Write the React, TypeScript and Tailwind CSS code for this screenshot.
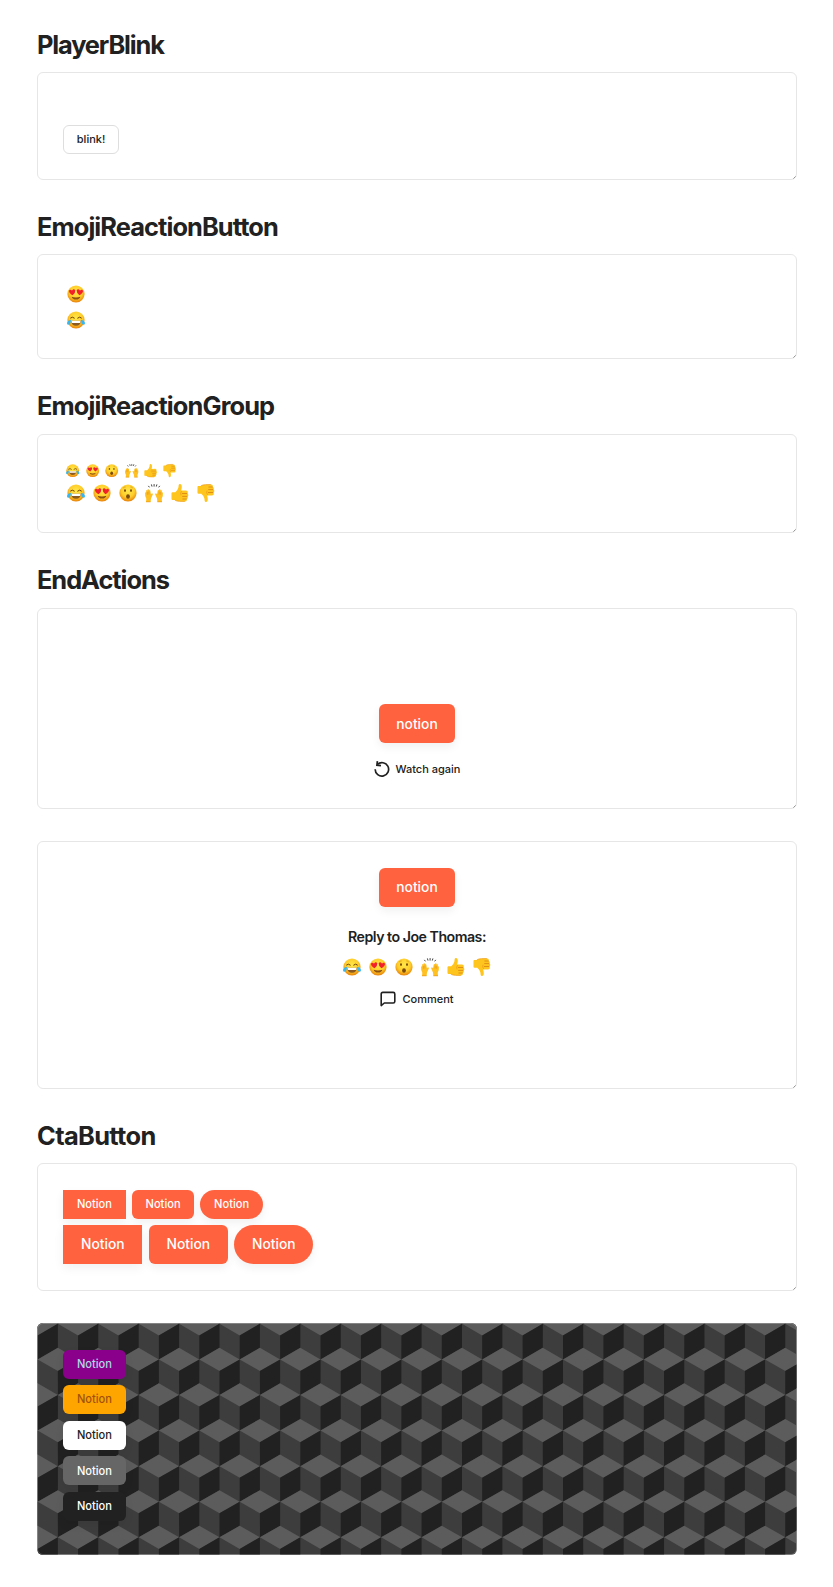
import type { ReactNode } from 'react';

type EmojiName = 'joy' | 'love' | 'wow' | 'hands' | 'up' | 'down';
const emojis: EmojiName[] = ['joy', 'love', 'wow', 'hands', 'up', 'down'];

function Thumb() {
  return (
    <>
      <path
        d="M4.5 13.2 Q4.5 12.3 5.5 12.3 L8.3 12.3 Q10.8 10.2 11.4 7.6 L11.7 5.1 Q12 3.8 13.2 4.1 Q15.2 4.8 14.7 8.1 L14.2 10.6 L19 10.5 Q21 10.7 20.8 12.3 Q20.8 13.1 20.2 13.5 Q21.6 14.1 21.3 15.4 Q21.1 16.2 20.3 16.5 Q21.1 17.2 20.7 18.2 Q20.4 18.9 19.6 19.1 Q20.1 19.7 19.7 20.5 Q19.3 21.4 17.8 21.4 L12.5 21.3 Q9.5 21.2 7.8 20 L5.2 19.9 Q4.5 19.8 4.5 19 Z"
        fill="#ffc51f"
      />
      <path d="M15.3 13.5H20M15.6 16.4H20M15.8 19H19.4" stroke="#dc8b12" strokeWidth=".9" strokeLinecap="round" fill="none" />
      <path d="M14.6 11.2Q13 13 14 15.3M7.8 20Q9.5 21.2 12.5 21.3L17.8 21.4" stroke="#eda01a" strokeWidth=".8" fill="none" />
    </>
  );
}

function Emoji({ name, small = false }: { name: EmojiName; small?: boolean }) {
  return (
    <svg viewBox="0 0 26 26" className={small ? 'size-[19.4px] shrink-0' : 'size-[26px] shrink-0'} role="img" aria-label={name}>
      <defs>
        <radialGradient id="face" cx=".5" cy=".38" r=".62">
          <stop offset="0" stopColor="#ffe94a" />
          <stop offset=".6" stopColor="#ffcd2a" />
          <stop offset="1" stopColor="#e67f08" />
        </radialGradient>
      </defs>
      {(name === 'joy' || name === 'love' || name === 'wow') && <circle cx="13" cy="13" r="8.6" fill="url(#face)" />}
      {name === 'joy' && (
        <>
          <path d="M7.6 10.9Q9.4 9.2 11.3 11M14.7 11Q16.6 9.2 18.4 10.9" stroke="#6b3d0c" strokeWidth="1" fill="none" strokeLinecap="round" />
          <path d="M8 13.7H18Q17.6 18.6 13 18.7Q8.4 18.6 8 13.7Z" fill="#8a5a22" />
          <path d="M8.4 13.7H17.6L17.2 15.9H8.8Z" fill="#fff" />
          <path d="M8 12.8Q4.3 13.4 4 16.2Q4.3 18.1 6.1 17.6Q7.9 16.7 8 12.8ZM18 12.8Q21.7 13.4 22 16.2Q21.7 18.1 19.9 17.6Q18.1 16.7 18 12.8Z" fill="#35b5f1" />
        </>
      )}
      {name === 'love' && (
        <>
          <path d="M9.6 14.2Q5.8 12.2 6 9.8Q6.8 7.7 9 9.4Q11 7.2 12.3 9.3Q12.7 11.8 9.6 14.2ZM16.4 14.2Q13.3 11.8 13.7 9.3Q15 7.2 17 9.4Q19.2 7.7 20 9.8Q20.2 12.2 16.4 14.2Z" fill="#f2202b" />
          <path d="M8.6 15.8Q13 17.4 17.4 15.8Q16.6 18.6 13 18.6Q9.4 18.6 8.6 15.8Z" fill="#8d5011" />
        </>
      )}
      {name === 'wow' && (
        <>
          <ellipse cx="10" cy="10.6" rx="1" ry="1.3" fill="#7a4a10" />
          <ellipse cx="16" cy="10.6" rx="1" ry="1.3" fill="#7a4a10" />
          <path d="M8.3 7.9Q9.3 6.8 10.6 7M15.4 7Q16.7 6.8 17.7 7.9" stroke="#c5841a" strokeWidth=".6" fill="none" />
          <ellipse cx="13" cy="16.5" rx="1.9" ry="2.3" fill="#7a4a10" />
        </>
      )}
      {name === 'hands' && (
        <>
          <g fill="#ffc021">
            <path id="raised-hand" d="M5 21.9L5.3 18.8Q3.8 16.8 4.1 13.1Q4.3 11.8 5.1 12.6L5.2 10.6Q5.6 9.3 6.4 10.5L6.6 9.6Q7.3 8.5 7.9 9.9L8 10.3Q8.9 9.4 9.3 10.7L9.9 14.1L10.9 13.5Q12.2 13.2 11.8 14.5L10 18.4L9.6 21.9Z" />
            <use href="#raised-hand" transform="translate(26 0) scale(-1 1)" />
          </g>
          <path d="M6.3 12V14.8M7.9 11.5V14.6M19.7 12V14.8M18.1 11.5V14.6M5 21.8H9.6M16.4 21.8H21" stroke="#e69a1b" strokeWidth=".7" fill="none" />
          <path d="M7.6 6.2L8.2 7M10.5 4.8L10.9 6.2M13.1 4.5V6.2M15.8 4.8L15.4 6.2M18.5 6.2L17.9 7" stroke="#444" strokeWidth="1" strokeLinecap="round" />
        </>
      )}
      {name === 'up' && <Thumb />}
      {name === 'down' && (
        <g transform="translate(0 26) scale(1 -1)">
          <Thumb />
        </g>
      )}
    </svg>
  );
}

function EmojiGroup({ small = false }: { small?: boolean }) {
  return (
    <div className="flex">
      {emojis.map((name) => (
        <Emoji key={name} name={name} small={small} />
      ))}
    </div>
  );
}

function Heading({ children, className }: { children: string; className: string }) {
  return <h2 className={`text-[25.4px] leading-[34px] font-bold ${className}`}>{children}</h2>;
}

function Panel({ children, className }: { children: ReactNode; className: string }) {
  return (
    <section className={`relative rounded-[6px] border border-[#e6e6e6] ${className}`}>
      {children}
      <svg viewBox="0 0 4 4" className="absolute right-0 bottom-0 size-[3px]">
        <path d="M.5 3.5L3.5 .5" stroke="#777" strokeWidth="1" />
      </svg>
    </section>
  );
}

const shapes = ['rounded-none', 'rounded-[6px]', 'rounded-full'];
const shadow = 'shadow-[0_4px_10px_rgba(0,0,0,0.06)]';

function SmallCta({ label = 'Notion', className }: { label?: string; className: string }) {
  return (
    <button className={`flex h-[29px] w-[62.3px] items-center justify-center text-[11.1px] font-[550] ${shadow} ${className}`}>
      {label}
    </button>
  );
}

function LargeCta({ label = 'Notion', className }: { label?: string; className: string }) {
  return (
    <button className={`flex h-[39px] items-center justify-center bg-[#ff623e] text-[13.8px] font-[550] text-white ${shadow} ${className}`}>
      {label}
    </button>
  );
}

const HALF_W = 20.215;
const HALF_H = 11.6;
const ROW = 35.6;

function Cubes() {
  const cubes: { x: number; y: number }[] = [];
  for (let row = -1; row < 7; row++) {
    for (let col = -1; col < 20; col++) {
      cubes.push({ x: 20.7 + col * HALF_W * 2 - (row % 2 !== 0 ? HALF_W : 0), y: 36.4 + row * ROW });
    }
  }
  return (
    <svg viewBox="0 0 760 231.4" className="absolute inset-0 size-full" aria-hidden="true">
      <rect width="760" height="232" fill="#3d3d3d" />
      {cubes.map(({ x, y }) => (
        <g key={`${x} ${y}`}>
          <polygon points={`${x},${y - HALF_H} ${x + HALF_W},${y} ${x},${y + HALF_H} ${x - HALF_W},${y}`} fill="#5c5c5c" />
          <polygon points={`${x},${y + HALF_H} ${x + HALF_W},${y} ${x + HALF_W},${y + ROW - HALF_H} ${x},${y + ROW}`} fill="#212121" />
        </g>
      ))}
    </svg>
  );
}

export default function App() {
  return (
    <main className="h-[1587px] w-[833px] bg-white pr-[36px] pl-[37px] font-['Inter',sans-serif] text-[#212121]">
      <Heading className="h-[72px] pt-[28px] tracking-[-1.15px]">PlayerBlink</Heading>
      <Panel className="h-[108.3px] pt-[51.8px] pl-[25.3px]">
        <button className="h-[29.4px] w-[55.5px] rounded-[6px] border border-[#dedede] text-[11px] font-[550]">blink!</button>
      </Panel>

      <Heading className="h-[74px] pt-[30px] tracking-[-0.92px]">EmojiReactionButton</Heading>
      <Panel className="flex h-[105.2px] flex-col pt-[25.8px] pl-[25.4px]">
        <Emoji name="love" />
        <Emoji name="joy" />
      </Panel>

      <Heading className="h-[74.3px] pt-[30px] tracking-[-0.88px]">EmojiReactionGroup</Heading>
      <Panel className="h-[98.8px] pt-[26.6px] pl-[25.4px]">
        <EmojiGroup small />
        <div className="-mt-px">
          <EmojiGroup />
        </div>
      </Panel>

      <Heading className="h-[75.2px] pt-[30.6px] tracking-[-1.05px]">EndActions</Heading>
      <Panel className="flex h-[201px] flex-col items-center pt-[95.7px]">
        <LargeCta label="notion" className="w-[76px] rounded-[6px]" />
        <div className="mt-[16px] flex h-[20px] items-center gap-[6px]">
          <svg viewBox="0 0 16 16" className="size-[16px]" fill="none" stroke="#212121" strokeWidth="1.7">
            <path d="M3.4 3.4A6.7 6.7 0 1 1 1.2 8.3" />
            <path d="M3.4 .2L2.9 4.2L7 4.6" />
          </svg>
          <span className="text-[11px] font-[550]">Watch again</span>
        </div>
      </Panel>

      <Panel className="mt-[32.7px] flex h-[247.2px] flex-col items-center pt-[25.5px]">
        <LargeCta label="notion" className="w-[76px] rounded-[6px]" />
        <p className="mt-[20px] h-[20px] text-[14.2px] leading-[20px] font-semibold tracking-[-0.5px]">Reply to Joe Thomas:</p>
        <div className="mt-[7px]">
          <EmojiGroup />
        </div>
        <div className="mt-[9px] flex h-[20px] items-center gap-[6px]">
          <svg viewBox="0 0 16 16" className="size-[16px]" fill="none" stroke="#212121" strokeWidth="1.6" strokeLinejoin="round">
            <path d="M1.2 14.6V3Q1.2 1.4 2.8 1.4H13.2Q14.8 1.4 14.8 3V10.4Q14.8 12 13.2 12H4.3Z" />
          </svg>
          <span className="text-[11px] font-[550]">Comment</span>
        </div>
      </Panel>

      <Heading className="h-[74.2px] pt-[30.4px] tracking-[-0.65px]">CtaButton</Heading>
      <Panel className="h-[127.7px] pt-[26px] pl-[25.3px]">
        <div className="flex gap-[6.3px]">
          {shapes.map((shape) => (
            <SmallCta key={shape} className={`bg-[#ff623e] text-white ${shape}`} />
          ))}
        </div>
        <div className="mt-[6.5px] flex gap-[6.5px]">
          {shapes.map((shape) => (
            <LargeCta key={shape} className={`w-[79px] ${shape}`} />
          ))}
        </div>
      </Panel>

      <section className="relative mt-[32.7px] h-[231.3px] overflow-hidden rounded-[6px]">
        <Cubes />
        <div className="relative flex flex-col gap-[6.6px] pt-[26.5px] pl-[26.3px]">
          <SmallCta className="rounded-[6px] bg-[#8b008b] text-[#add8e6]" />
          <SmallCta className="rounded-[6px] bg-[#ffa500] text-[#a0520d]" />
          <SmallCta className="rounded-[6px] bg-white text-[#212121]" />
          <SmallCta className="rounded-[6px] bg-[#666666] text-white" />
          <SmallCta className="rounded-[6px] bg-[#212121] text-white" />
        </div>
        <div className="pointer-events-none absolute inset-0 rounded-[6px] border border-white/25" />
      </section>
    </main>
  );
}
